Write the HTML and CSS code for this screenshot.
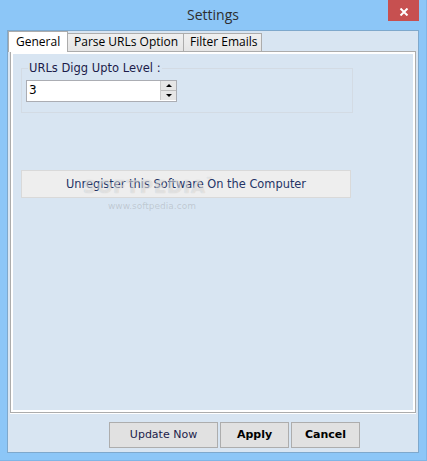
FILE: index.html
```html
<!DOCTYPE html>
<html lang="en">
<head>
  <meta charset="UTF-8">
  <title>Settings</title>
  <link rel="stylesheet" href="styles.css">
</head>
<body>
  <div class="window">
    <!-- Title bar -->
    <div class="titlebar">
      <span></span>
      <div class="title">Settings</div>
      <div class="close">
        <svg width="10" height="8" viewBox="0 0 10 8">
          <path d="M1.5 0.5 L8.5 7.5 M8.5 0.5 L1.5 7.5" stroke="#fff" stroke-width="2" fill="none"/>
        </svg>
      </div>
    </div>

    <div class="client">
      <div class="tabcontrol">
        <div class="tabs">
          <div class="tab active">General</div>
          <div class="tab">Parse URLs Option</div>
          <div class="tab">Filter Emails</div>
        </div>
        <div class="panel">
          <div class="page">
            <fieldset class="group">
              <legend>URLs Digg Upto Level :</legend>
              <div class="numeric">
                <span class="value">3</span>
                <div class="spin">
                  <div class="spin-btn"><span class="arrow-up"></span></div>
                  <div class="spin-btn"><span class="arrow-down"></span></div>
                </div>
              </div>
            </fieldset>

            <div class="wide-btn">Unregister this Software On the Computer</div>

            <div class="watermark">
              <div class="wm-logo">SOFTPEDIA<sup>™</sup></div>
              <div class="wm-url">www.softpedia.com</div>
            </div>
          </div>
        </div>
      </div>

      <div class="buttons">
        <div class="btn update">Update Now</div>
        <div class="btn bold apply">Apply</div>
        <div class="btn bold cancel">Cancel</div>
      </div>
    </div>
  </div>
</body>
</html>
```

FILE: styles.css
```css
* {
  box-sizing: border-box;
}

body {
  margin: 0;
  font-family: "DejaVu Sans", Verdana, sans-serif;
  font-size: 11px;
  overflow: hidden;
}

.window {
  width: 427px;
  height: 461px;
  background: #8cc6f7;
  padding: 0 7px 7px 7px;
  display: flex;
  flex-direction: column;
  border-right: 1px solid #7fb5e6;
  border-bottom: 1px solid #7fb5e6;
}

.titlebar {
  height: 30px;
  display: grid;
  grid-template-columns: 1fr auto 1fr;
}

.title {
  font-family: "Open Sans", sans-serif;
  font-size: 14px;
  color: #2e2e2e;
  padding-top: 5px;
  line-height: 20px;
}

.close {
  justify-self: end;
  width: 31px;
  height: 21px;
  background: #c75050;
  display: flex;
  align-items: center;
  justify-content: center;
  padding-top: 2px;
  padding-left: 1px;
}

.close svg {
  display: block;
}

.client {
  flex: 1;
  background: #d8e5f2;
  border: 1px solid #7ea8cc;
  display: flex;
  flex-direction: column;
}

/* Tabs */
.tabcontrol {
  display: flex;
  flex-direction: column;
}

.tabs {
  display: flex;
  align-items: flex-end;
  height: 20px;
  font-family: "Open Sans", sans-serif;
  font-size: 12px;
  color: #000;
}

.tab {
  height: 18px;
  line-height: 16px;
  border: 1px solid #acacac;
  border-bottom: none;
  background: linear-gradient(#f0f0f0, #e5e5e5);
  padding: 0 6px;
  white-space: nowrap;
}

.tab.active {
  width: 60px;
  height: 21px;
  line-height: 19px;
  background: #fff;
  margin-bottom: -1px;
  position: relative;
  z-index: 1;
  padding: 0 0 0 7px;
}

.tab + .tab {
  margin-left: -1px;
}

.tab.active + .tab {
  margin-left: 0;
  border-left: none;
  width: 116px;
  padding-left: 6px;
}

.tab:last-child {
  width: 79px;
  padding-left: 6px;
}

.panel {
  margin: 0 2px 0 2px;
  height: 362px;
  border: 1px solid #acacac;
  background: #fff;
  padding: 2px;
  box-shadow: 0 1px 0 #fff;
}

.page {
  height: 100%;
  background: #d8e5f2;
  padding: 7px 0 0 8px;
  position: relative;
}

/* Group box */
.group {
  margin: 0;
  width: 332px;
  height: 52px;
  border: 1px solid #d3dbe4;
  padding: 5px 4px 0 4px;
}

.group legend {
  padding: 0 1px;
  margin-left: 2px;
  color: #1c1c4a;
  line-height: 14px;
  font-size: 11.5px;
}

.numeric {
  width: 151px;
  height: 22px;
  background: #fff;
  border: 1px solid #abadb3;
  display: flex;
  justify-content: space-between;
  color: #000;
}

.value {
  padding-left: 2px;
  line-height: 19px;
  font-size: 12px;
}

.spin {
  width: 16px;
  margin: 0 0 1px 0;
  display: flex;
  flex-direction: column;
  border-left: 1px solid #c9c9c9;
}

.spin-btn {
  flex: 1;
  background: #e6e6e6;
  display: flex;
  align-items: center;
  justify-content: center;
}

.spin-btn + .spin-btn {
  border-top: 1px solid #bdbdbd;
}

.arrow-up {
  width: 0;
  height: 0;
  border-left: 3px solid transparent;
  border-right: 3px solid transparent;
  border-bottom: 3px solid #000;
}

.arrow-down {
  width: 0;
  height: 0;
  border-left: 3px solid transparent;
  border-right: 3px solid transparent;
  border-top: 3px solid #000;
}

.wide-btn {
  margin-top: 57px;
  width: 330px;
  height: 28px;
  line-height: 26px;
  background: #eeeeee;
  border: 1px solid #d9d9d9;
  text-align: center;
  color: #243466;
  font-size: 11.4px;
}

.watermark {
  position: absolute;
  left: 70px;
  top: 122px;
  pointer-events: none;
}

.wm-logo {
  font-family: "DejaVu Sans", sans-serif;
  font-weight: bold;
  font-size: 18px;
  letter-spacing: 1px;
  color: rgba(255, 255, 255, 0.5);
  text-shadow: 0 0 1px rgba(0, 0, 0, 0.2);
}

.wm-logo sup {
  font-size: 7px;
  vertical-align: top;
}

.wm-url {
  margin: 4px 0 0 25px;
  font-size: 9px;
  color: rgba(110, 110, 110, 0.25);
}

/* Bottom buttons */
.buttons {
  display: flex;
  gap: 2px;
  margin-top: 9px;
  padding-left: 101px;
}

.btn {
  height: 26px;
  line-height: 24px;
  background: #e1e1e1;
  border: 1px solid #adadad;
  text-align: center;
  color: #1c1c4a;
}

.btn.bold {
  font-weight: bold;
  color: #000;
}

.update {
  width: 109px;
}

.apply {
  width: 69px;
}

.cancel {
  width: 69px;
}
```
